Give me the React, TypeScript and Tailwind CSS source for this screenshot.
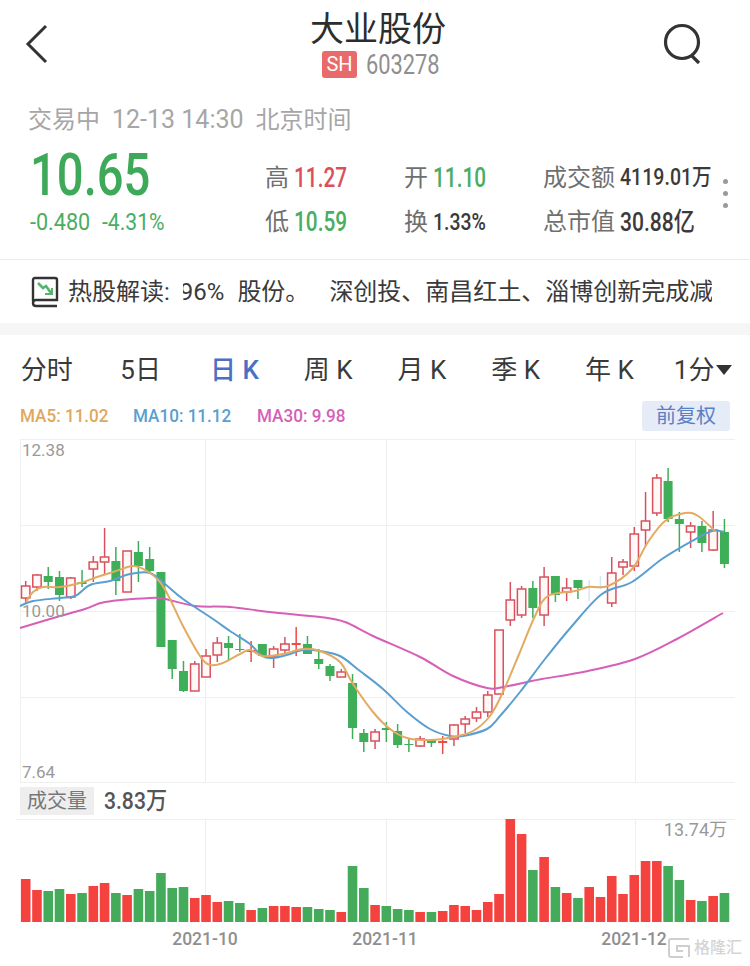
// K-line page for 大业股份
type Candle = [number, number, number, number, string];

// body top, body bottom, wick top, wick bottom, kind (r hollow red, g green, c pale)
const candles: Candle[] = [
  [587, 599, 582, 605, 'r'], [576, 588, 575, 592, 'r'], [577, 583, 568, 590, 'g'], [578, 596, 572, 602, 'g'],
  [579, 598, 578, 600, 'r'], [583, 585, 571, 588, 'g'], [563, 570, 557, 583, 'r'], [558, 563, 529, 575, 'r'],
  [562, 582, 548, 596, 'g'], [552, 593, 552, 593, 'r'], [553, 567, 542, 583, 'g'], [560, 572, 548, 573, 'g'],
  [573, 648, 573, 648, 'g'], [641, 670, 641, 680, 'g'], [672, 692, 662, 693, 'g'], [665, 692, 662, 692, 'r'],
  [657, 678, 650, 678, 'r'], [644, 656, 638, 663, 'r'], [644, 649, 637, 662, 'g'], [650, 651, 635, 653, 'g'],
  [651, 652, 642, 663, 'x'], [645, 657, 645, 657, 'g'], [650, 657, 647, 669, 'r'], [645, 651, 638, 655, 'r'],
  [644, 645, 628, 657, 'x'], [645, 655, 637, 655, 'g'], [660, 665, 650, 670, 'g'], [667, 677, 665, 682, 'g'],
  [673, 678, 670, 678, 'r'], [684, 729, 675, 740, 'g'], [734, 743, 730, 753, 'g'], [733, 742, 730, 750, 'r'],
  [729, 731, 723, 743, 'g'], [732, 746, 725, 749, 'g'], [745, 746, 740, 753, 'g'], [740, 747, 737, 748, 'r'],
  [740, 744, 740, 748, 'g'], [742, 743, 737, 755, 'x'], [726, 740, 725, 747, 'r'], [720, 725, 717, 734, 'r'],
  [713, 719, 708, 723, 'r'], [696, 713, 692, 718, 'r'], [631, 695, 631, 695, 'r'], [601, 621, 583, 627, 'r'],
  [590, 616, 587, 619, 'r'], [589, 609, 582, 619, 'g'], [578, 616, 568, 627, 'r'], [577, 596, 577, 603, 'g'],
  [589, 593, 579, 602, 'r'], [581, 589, 581, 600, 'g'], [587, 588, 581, 602, 'c'], [587, 588, 577, 590, 'c'],
  [574, 604, 558, 608, 'r'], [563, 568, 560, 576, 'r'], [535, 567, 528, 572, 'r'], [522, 531, 493, 547, 'r'],
  [479, 514, 475, 517, 'r'], [482, 520, 469, 523, 'g'], [520, 525, 513, 553, 'g'], [527, 533, 523, 549, 'r'],
  [527, 544, 522, 553, 'g'], [531, 551, 512, 552, 'r'], [533, 565, 520, 569, 'g'],
];

// top of each volume bar, r or g
const volumes: [number, string][] = [
  [880, 'r'], [891, 'r'], [892, 'g'], [890, 'g'], [895, 'r'], [894, 'g'], [887, 'r'], [884, 'r'], [894, 'g'], [896, 'r'],
  [890, 'g'], [892, 'g'], [874, 'g'], [889, 'g'], [888, 'g'], [899, 'r'], [896, 'r'], [903, 'r'], [902, 'g'], [904, 'g'],
  [911, 'r'], [909, 'g'], [907, 'r'], [907, 'r'], [908, 'r'], [908, 'g'], [910, 'g'], [911, 'g'], [913, 'r'], [867, 'g'],
  [889, 'g'], [906, 'r'], [907, 'g'], [910, 'g'], [911, 'g'], [913, 'r'], [913, 'g'], [912, 'r'], [906, 'r'], [907, 'r'],
  [911, 'r'], [903, 'r'], [895, 'r'], [820, 'r'], [835, 'r'], [871, 'g'], [858, 'r'], [888, 'g'], [894, 'r'], [899, 'g'],
  [888, 'r'], [898, 'r'], [877, 'r'], [895, 'r'], [876, 'r'], [862, 'r'], [862, 'r'], [867, 'g'], [881, 'g'], [901, 'r'],
  [902, 'g'], [897, 'r'], [894, 'g'],
];

const ma5: number[][] = [[26, 603], [33, 593], [43, 588], [60, 588], [80, 584], [97, 578], [113, 573], [133, 567], [147, 572], [160, 583], [170, 600], [183, 627], [200, 657], [210, 666], [223, 664], [240, 655], [250, 651], [263, 657], [283, 655], [303, 650], [320, 652], [340, 663], [353, 685], [373, 713], [390, 730], [407, 739], [430, 741], [453, 738], [473, 732], [490, 717], [503, 693], [520, 653], [535, 617], [548, 597], [575, 592], [588, 588], [608, 587], [632, 570], [648, 543], [665, 522], [685, 514], [698, 517], [715, 532]];
const ma10: number[][] = [[20, 607], [33, 602], [60, 599], [75, 597], [90, 586], [110, 582], [130, 575], [150, 574], [165, 585], [183, 600], [213, 620], [230, 632], [250, 645], [262, 657], [273, 659], [290, 655], [303, 651], [320, 652], [340, 657], [360, 672], [383, 690], [407, 713], [430, 730], [450, 737], [463, 737], [487, 730], [500, 717], [520, 693], [545, 660], [572, 627], [602, 595], [632, 583], [662, 560], [692, 542], [712, 532], [724, 533]];
const ma30: number[][] = [[20, 629], [50, 620], [85, 610], [105, 603], [150, 599], [165, 600], [195, 607], [230, 608], [270, 613], [320, 618], [345, 623], [373, 637], [420, 658], [453, 677], [487, 689], [503, 688], [527, 683], [542, 680], [588, 672], [635, 660], [677, 640], [723, 614]];

// catmull-rom through the points so the averages stay smooth
const smooth = (p: number[][]) => {
  let d = `M${p[0][0]} ${p[0][1]}`;
  for (let i = 0; i < p.length - 1; i++) {
    const a = p[Math.max(i - 1, 0)], b = p[i], c = p[i + 1], e = p[Math.min(i + 2, p.length - 1)];
    d += `C${b[0] + (c[0] - a[0]) / 6} ${b[1] + (c[1] - a[1]) / 6} ${c[0] - (e[0] - b[0]) / 6} ${c[1] - (e[1] - b[1]) / 6} ${c[0]} ${c[1]}`;
  }
  return d;
};

const xAt = (i: number) => 25.7 + i * 11.27;
const gridX = [205.5, 386.5, 635.5];

const Stat = ({ label, value, tone }: { label: string; value: string; tone: string }) => (
  <div className="flex items-center gap-[5px] h-[44px] whitespace-nowrap">
    <span className="text-[24px] text-[#6f6f6f]">{label}</span>
    <span className={`inline-block origin-left font-medium ${tone}`}>{value}</span>
  </div>
);

const KChart = () => (
  <svg className="block" width="750" height="344" viewBox="0 440 750 344">
    {[440.5, 526.5, 612.5, 698.5, 783.5].map((y) => (
      <line key={y} x1="20" x2="735" y1={y} y2={y} stroke="#efefef" strokeWidth="1" />
    ))}
    {[20.5, ...gridX].map((x) => (
      <line key={x} x1={x} x2={x} y1="440" y2="784" stroke="#efefef" strokeWidth="1" />
    ))}
    {candles.map(([top, bottom, wickTop, wickBottom, kind], i) => {
      const x = xAt(i);
      const color = kind === 'g' ? '#3fae58' : kind === 'c' ? '#cfeaf0' : kind === 'x' ? '#ee4a48' : '#d8525e';
      return (
        <g key={i}>
          <line x1={x} x2={x} y1={wickTop} y2={wickBottom} stroke={color} strokeWidth="1.5" />
          {kind === 'g' && <rect x={x - 4.5} y={top} width="9" height={bottom - top} fill={color} />}
          {kind === 'r' && <rect x={x - 4.2} y={top} width="8.4" height={bottom - top} fill="#fff8f7" stroke={color} strokeWidth="1.5" />}
          {(kind === 'x' || kind === 'c') && <rect x={x - 4.5} y={top} width="9" height={bottom - top + 1} fill={color} />}
        </g>
      );
    })}
    <path d={smooth(ma30)} fill="none" stroke="#d65fb8" strokeWidth="2" />
    <path d={smooth(ma10)} fill="none" stroke="#5a9fd0" strokeWidth="2" />
    <path d={smooth(ma5)} fill="none" stroke="#e3ab62" strokeWidth="2" />
  </svg>
);

const VolumeChart = () => (
  <svg className="block" width="750" height="104" viewBox="0 820 750 104">
    <line x1="16" x2="735" y1="820.5" y2="820.5" stroke="#efefef" />
    {gridX.map((x) => (
      <line key={x} x1={x} x2={x} y1="820" y2="924" stroke="#efefef" />
    ))}
    {volumes.map(([top, kind], i) => (
      <rect key={i} x={xAt(i) - 4.8} y={top} width="9.6" height={923 - top} fill={kind === 'g' ? '#44ab5a' : '#f4433f'} />
    ))}
  </svg>
);

export default function App() {
  return (
    <div className="w-[750px] h-[966px] overflow-hidden bg-white font-['Roboto','Noto_Sans_CJK_SC',sans-serif]">
      {/* Title bar */}
      <div className="flex justify-between h-[100px]">
        <svg className="mt-[24px] ml-[24px]" width="26" height="40" viewBox="0 0 26 40" fill="none" stroke="#333" strokeWidth="3">
          <path d="M22 2 L4 20 L22 38" />
        </svg>
        <div className="flex flex-col items-center ml-[44px]">
          <div className="text-[34px] leading-[44px] mt-[7px] text-[#2d2d2d]">大业股份</div>
          <div className="flex items-center gap-[9px] ml-[6px]">
            <span className="bg-[#e86a6a] text-white text-[20px] leading-[27px] w-[35px] text-center rounded-[3px]">SH</span>
            <span className="inline-block w-[74px] origin-left scale-x-[0.78] text-[28px] leading-[27px] text-[#8f8f8f]">603278</span>
          </div>
        </div>
        <svg className="mt-[22px] mr-[46px]" width="42" height="44" viewBox="0 0 42 44" fill="none" stroke="#333" strokeWidth="3.2">
          <circle cx="20" cy="20" r="16.5" />
          <path d="M29 33 L37 41" />
        </svg>
      </div>

      {/* Quote */}
      <div className="h-[40px] pl-[28px] flex items-center gap-[12px] text-[24px] text-[#a6a6a6]">
        <span>交易中</span>
        <span className="text-[25px]">12-13 14:30</span>
        <span>北京时间</span>
      </div>
      <div className="relative flex h-[120px] border-b border-[#ececec]">
        <div className="w-[265px] pl-[30px] pt-[2px]">
          <div className="origin-left scale-x-[0.8] text-[59px] leading-[66px] font-medium text-[#3fa95a]">10.65</div>
          <div className="flex gap-[12px] text-[24px] leading-[28px] text-[#49ad62] whitespace-nowrap">
            <span className="inline-block w-[60px] origin-left scale-x-[0.9]">-0.480</span>
            <span className="inline-block w-[62px] origin-left scale-x-[0.88]">-4.31%</span>
          </div>
        </div>
        <div className="grid grid-cols-[139px_139px_1fr] flex-1 content-start pt-[16px] text-[27px]">
          <Stat label="高" value="11.27" tone="scale-x-[0.77] text-[#d9505a]" />
          <Stat label="开" value="11.10" tone="scale-x-[0.77] text-[#49ad62]" />
          <Stat label="成交额" value="4119.01万" tone="scale-x-[0.85] text-[23px] text-[#3a3a3a]" />
          <Stat label="低" value="10.59" tone="scale-x-[0.77] text-[#49ad62]" />
          <Stat label="换" value="1.33%" tone="scale-x-[0.81] text-[24px] text-[#3a3a3a]" />
          <Stat label="总市值" value="30.88亿" tone="scale-x-[0.81] text-[26px] text-[#3a3a3a]" />
        </div>
        <div className="absolute left-[723px] top-[39px] flex flex-col gap-[7px]">
          <span className="w-[5px] h-[5px] rounded-full bg-[#9a9a9a]" />
          <span className="w-[5px] h-[5px] rounded-full bg-[#9a9a9a]" />
          <span className="w-[5px] h-[5px] rounded-full bg-[#9a9a9a]" />
        </div>
      </div>

      {/* Hot stock ticker */}
      <div className="flex items-center h-[63px] pl-[30px] text-[24px] text-[#3a3a3a] whitespace-nowrap">
        <svg width="30" height="32" viewBox="0 0 30 32" fill="none">
          <path d="M3 25 V4 Q3 2 5 2 H25 Q27 2 27 4 V24 H6 Q3 24 3 27 Q3 30 6 30 H27" stroke="#333" strokeWidth="2.4" />
          <path d="M8 7 L13 12 L16 10 L21 17" stroke="#55b56d" strokeWidth="2.6" />
          <path d="M15 18 H22 V12" stroke="#55b56d" strokeWidth="2" />
        </svg>
        <span className="ml-[8px]">热股解读:</span>
        <div className="ml-[13px] w-[529px] overflow-hidden">
          <div className="ml-[-3px]">96%<span className="ml-[13px]">股份。</span><span className="ml-[20px]">深创投、南昌红土、淄博创新完成减持</span></div>
        </div>
      </div>
      <div className="h-[12px] bg-[#f6f6f6]" />

      {/* Period tabs */}
      <div className="grid grid-cols-8 h-[66px] pt-[4px] text-[26px] text-[#3a3a3a]">
        {['分时', '5日', '日 K', '周 K', '月 K', '季 K', '年 K'].map((t) => (
          <div key={t} className={`flex items-center justify-center ${t === '日 K' ? 'text-[#4a6fc4] font-medium' : ''}`}>
            {t}
          </div>
        ))}
        <div className="flex items-center justify-center gap-[2px]">
          1分
          <svg width="16" height="10" viewBox="0 0 16 10"><path d="M0 0 H16 L8 10 Z" fill="#333" /></svg>
        </div>
      </div>

      {/* Moving averages */}
      <div className="flex items-center h-[30px] pl-[20px] pr-[20px] text-[19px] font-medium whitespace-nowrap">
        <span className="inline-block origin-left scale-x-[0.9] text-[#e0a85f] w-[113px]">MA5: 11.02</span>
        <span className="inline-block origin-left scale-x-[0.9] text-[#5a9fd0] w-[124px]">MA10: 11.12</span>
        <span className="inline-block origin-left scale-x-[0.9] text-[#d65fb8]">MA30: 9.98</span>
        <span className="ml-auto w-[88px] h-[30px] leading-[30px] text-center rounded-[3px] bg-[#e6ecf7] text-[#5b7fc4] text-[20px] font-normal">前复权</span>
      </div>

      <div className="mt-[8px] relative h-[344px]">
        <KChart />
        <span className="absolute left-[22px] top-[0px] text-[17px] leading-[22px] text-[#999]">12.38</span>
        <span className="absolute left-[22px] top-[161px] text-[17px] leading-[22px] text-[#999]">10.00</span>
        <span className="absolute left-[22px] top-[322px] text-[17px] leading-[22px] text-[#999]">7.64</span>
      </div>

      {/* Volume */}
      <div className="flex items-center gap-[10px] h-[36px] pl-[20px]">
        <span className="w-[74px] h-[28px] leading-[28px] text-center bg-[#eeeeee] text-[#777] text-[20px]">成交量</span>
        <span className="inline-block origin-left scale-x-[0.88] text-[24px] font-medium text-[#555]">3.83万</span>
      </div>
      <div className="relative h-[104px]">
        <VolumeChart />
        <span className="absolute right-[23px] top-[0px] text-[18px] leading-[22px] text-[#999]">13.74万</span>
      </div>

      {/* Date axis */}
      <div className="relative h-[43px] text-[17.5px] text-[#8f8f8f] font-medium">
        <span className="absolute left-[205px] top-[3px] -translate-x-1/2">2021-10</span>
        <span className="absolute left-[385px] top-[3px] -translate-x-1/2">2021-11</span>
        <span className="absolute left-[634px] top-[3px] -translate-x-1/2">2021-12</span>
        {/* Watermark */}
        <div className="absolute left-[668px] top-[14px] flex items-center gap-[3px] text-[#d4d4d4]">
          <svg width="23" height="22" viewBox="0 0 23 22" fill="none" stroke="#cfcfcf" strokeWidth="2">
            <path d="M21 2 H3 Q1 2 1 4 V18 Q1 20 3 20 H15 M21 20 V9 H9 V14 H15" />
          </svg>
          <span className="text-[16px] leading-[22px] whitespace-nowrap">格隆汇</span>
        </div>
      </div>
    </div>
  );
}
